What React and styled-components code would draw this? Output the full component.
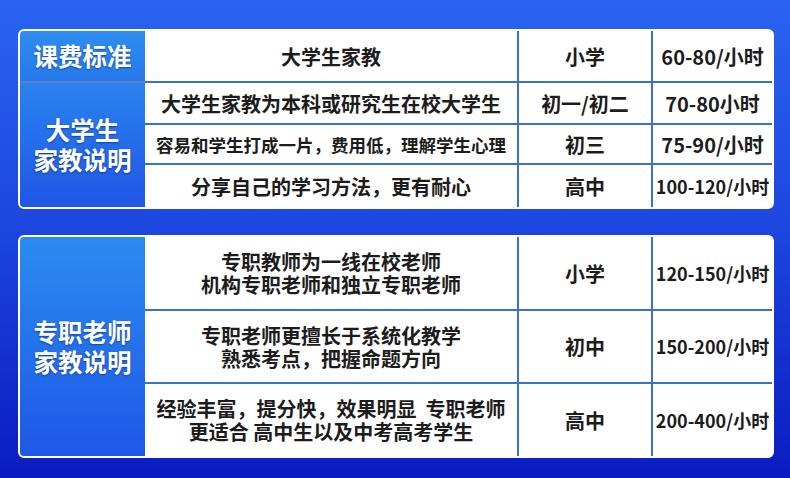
import React from "react";
import styled, { createGlobalStyle } from "styled-components";

const Global = createGlobalStyle`
  html, body {
    margin: 0;
    padding: 0;
  }
  body {
    width: 790px;
    height: 478px;
    overflow: hidden;
    font-family: "Noto Sans CJK SC", "Noto Sans", sans-serif;
    background: linear-gradient(180deg, #2a64f0 0%, #1c44de 50%, #0a1cc0 100%);
  }
`;

const Page = styled.div`
  display: flex;
  flex-direction: column;
  gap: 26px;
  padding: 29px 0 0 18px;
`;

const Card = styled.div`
  display: grid;
  grid-template-columns: 125px 372px 134px 121px;
  grid-template-rows: ${(p) => p.rows};
  width: 752px;
  border: 2px solid #fff;
  border-radius: 6px;
  background: #fff;
  overflow: hidden;
`;

const Side = styled.div`
  grid-column: 1;
  grid-row: ${(p) => p.span || "auto"};
  display: flex;
  align-items: center;
  justify-content: center;
  text-align: center;
  white-space: pre-line;
  color: #fff;
  font-weight: 700;
  font-size: 24.5px;
  line-height: 30px;
  text-shadow: 0 1px 2px rgba(0, 10, 60, 0.45);
  background: ${(p) => p.bg};
  border-top: ${(p) => (p.divided ? "2px solid #5a7fc6" : "none")};
`;

const Cell = styled.div`
  display: flex;
  align-items: center;
  justify-content: center;
  text-align: center;
  color: #1c1c1c;
  font-weight: 700;
  font-size: ${(p) => p.size || 20}px;
  line-height: 23px;
  white-space: pre-line;
  border-left: ${(p) => (p.first ? "none" : "2px solid #3a70d0")};
  border-top: ${(p) => (p.top ? "none" : "2px solid #3a70d0")};
`;

const collegeRows = [
  ["大学生家教", "小学", "60-80/小时"],
  ["大学生家教为本科或研究生在校大学生", "初一/初二", "70-80小时"],
  ["容易和学生打成一片，费用低，理解学生心理", "初三", "75-90/小时"],
  ["分享自己的学习方法，更有耐心", "高中", "100-120/小时"],
];

const proRows = [
  ["专职教师为一线在校老师\n机构专职老师和独立专职老师", "小学", "120-150/小时"],
  ["专职老师更擅长于系统化教学\n熟悉考点，把握命题方向", "初中", "150-200/小时"],
  ["经验丰富，提分快，效果明显\u00a0\u00a0专职老师\n更适合 高中生以及中考高考学生", "高中", "200-400/小时"],
];

function Rows({ rows, smallDesc, smallPrice }) {
  return rows.map((r, i) => (
    <React.Fragment key={i}>
      <Cell first top={i === 0} size={smallDesc && smallDesc(i) ? 17.5 : 20}>
        {r[0]}
      </Cell>
      <Cell top={i === 0}>{r[1]}</Cell>
      <Cell top={i === 0} size={smallPrice(i) ? 18 : 20}>
        {r[2]}
      </Cell>
    </React.Fragment>
  ));
}

export default function App() {
  return (
    <>
      <Global />
      <Page>
        <Card rows="50px 42px 40px 44px">
          <Side span="1" bg="linear-gradient(180deg, #2d8ef0, #2679ec)">
            课费标准
          </Side>
          <Side
            span="2 / 5"
            divided
            bg="linear-gradient(180deg, #2a82ef, #1f56e6)"
          >
            {"大学生\n家教说明"}
          </Side>
          <Rows
            rows={collegeRows}
            smallDesc={(i) => i === 2}
            smallPrice={(i) => i === 3}
          />
        </Card>
        <Card rows="72px 73px 74px">
          <Side span="1 / 4" bg="linear-gradient(180deg, #2b8cf0, #1e57e8)">
            {"专职老师\n家教说明"}
          </Side>
          <Rows rows={proRows} smallPrice={() => true} />
        </Card>
      </Page>
    </>
  );
}
